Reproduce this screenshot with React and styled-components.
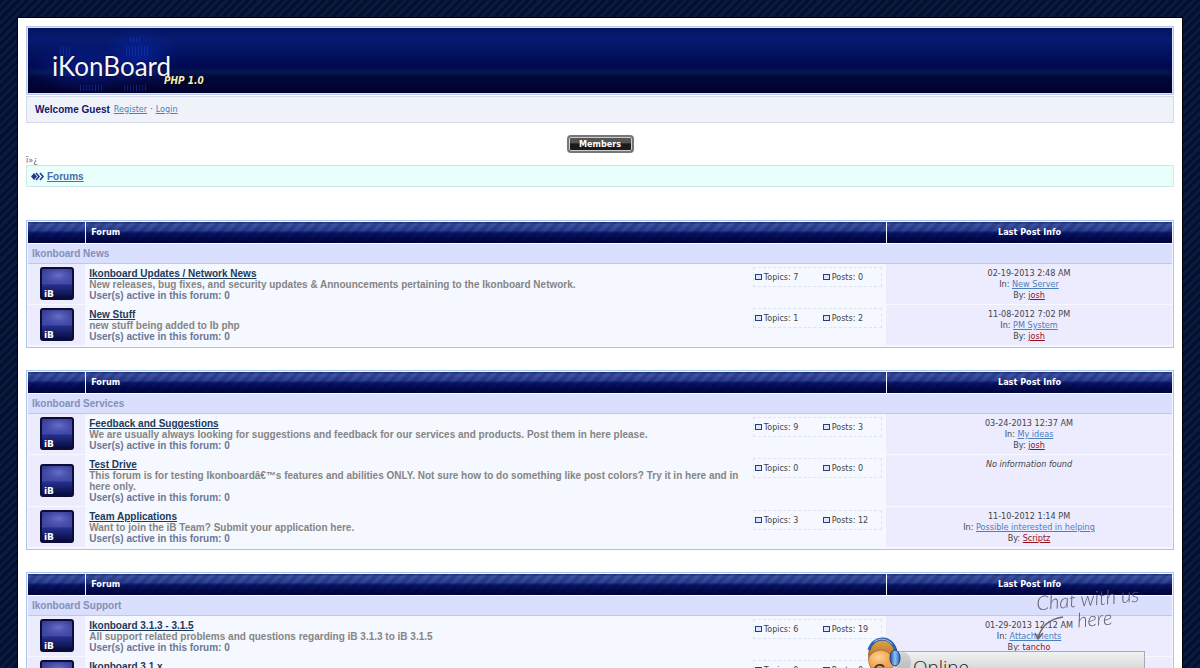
import React from "react";
import styled, { createGlobalStyle } from "styled-components";

const ui = `"DejaVu Sans Condensed", "DejaVu Sans", sans-serif`;
const boldUi = `"Liberation Sans", Arial, sans-serif`;

const Global = createGlobalStyle`
  * { box-sizing: border-box; }
  html { overflow: hidden; }
  body {
    margin: 0;
    padding: 17px;
    font: 9px/11px ${ui};
    color: #444;
    background: repeating-linear-gradient(135deg, #04102e 0 3px, #0a1b40 3px 6px);
  }
`;

const Page = styled.div`
  background: #fff;
  border: 1px solid #000;
  padding: 8px;
`;

const Banner = styled.header`
  height: 69px;
  border: 1px solid #b9c8ea;
  padding: 1px;
  background: #dde4fa;
`;

const BannerArt = styled.div`
  position: relative;
  height: 65px;
  background: linear-gradient(#04155f 0, #061b70 18%, #020f5c 45%, #010850 60%, #05184e 68%, #02063c 76%, #01022c 100%);
`;

const BannerGlow = styled.svg`
  display: block;
`;

const Logo = styled.h1`
  position: absolute;
  left: 24px;
  top: 23px;
  margin: 0;
  font: 400 26px/30px Lato, sans-serif;
  color: #f5f5ff;
  text-shadow: 0 0 2px #000;
`;

const Version = styled.span`
  position: absolute;
  left: 136px;
  top: 46px;
  font: italic 700 10px/14px "DejaVu Sans Condensed", sans-serif;
  color: #f4eebb;
  text-shadow: 1px 1px 1px #000;
`;

const UserBar = styled.nav`
  display: flex;
  align-items: center;
  gap: 4px;
  height: 27px;
  margin-top: 1px;
  padding: 0 8px;
  border: 1px solid #d3dce6;
  background: #eff3f9;
  strong { font: 700 10px/11px ${boldUi}; color: #16166b; }
`;

const UserLinks = styled.span`
  display: flex;
  gap: 3px;
`;

const Link = styled.a`
  color: ${(p) => p.$color || "#4a7fc0"};
  text-decoration: ${(p) => (p.$plain ? "none" : "underline")};
`;

const ButtonRow = styled.div`
  display: flex;
  justify-content: center;
  padding-top: 12px;
`;

const MembersButton = styled.button`
  width: 67px;
  height: 18px;
  padding: 0;
  border: 2px solid #777;
  border-radius: 4px;
  outline: 1px solid #ccc;
  outline-offset: -3px;
  background: linear-gradient(#555 0 40%, #1b1b1b 50%);
  color: #fff;
  font: 700 9px/12px ${ui};
`;

const Stray = styled.div`
  margin-top: 2px;
  font-size: 9px;
  margin-bottom: -1px;
  color: #666;
`;

const Crumbs = styled.nav`
  display: flex;
  align-items: center;
  gap: 3px;
  height: 22px;
  padding: 0 4px;
  margin-bottom: 33px;
  border: 1px solid #cfe9e6;
  background: #e8fffb;
  font: 700 10px/11px ${boldUi};
`;

const Board = styled.section`
  margin-bottom: 22px;
  border: 1px solid #a9c6e8;
  padding: 1px;
  background: #f4f6ff;
`;

const Table = styled.table`
  width: 100%;
  table-layout: fixed;
  border-collapse: separate;
  border-spacing: 0;
`;

const Head = styled.th`
  height: 22px;
  padding: 0 5px;
  border-bottom: 1px solid #fff;
  border-left: ${(p) => (p.$first ? "none" : "1px solid #f4f6ff")};
  background:
    repeating-linear-gradient(135deg, #0000 0 4px, #00002830 4px 8px),
    linear-gradient(#22358a 0, #3d52a4 12%, #2c4094 40%, #0a1767 52%, #020a50 75%, #01053a 100%);
  color: #fff;
  font-size: 9px;
  text-align: ${(p) => (p.$center ? "center" : "left")};
`;

const Category = styled.th`
  height: 20px;
  padding: 0 4px;
  border-bottom: 1px solid #bcc8ec;
  background: #d9dffd;
  color: #8390b8;
  font: 700 10px/11px ${boldUi};
  text-align: left;
`;

const Cell = styled.td`
  padding: ${(p) => (p.$tight ? "3px 4px" : "4px 4px 3px")};
  border-bottom: 1px solid #f8f9ff;
  background: ${(p) => (p.$tint ? "#ececfe" : "#f5f8fe")};
  vertical-align: ${(p) => (p.$middle ? "middle" : "top")};
  text-align: ${(p) => (p.$center ? "center" : "left")};
`;

const Badge = styled.svg`
  display: block;
  margin: 0 auto;
`;

const ForumText = styled.div`
  font: 700 10px/11px ${boldUi};
  color: #858585;
`;

const Active = styled.div`
  color: #6b7796;
`;

const Stats = styled.div`
  display: grid;
  grid-template-columns: 68px 1fr;
  align-items: center;
  height: 20px;
  padding-left: 1px;
  border: 1px dashed #dce4f2;
  font: 8px/11px "DejaVu Sans", sans-serif;
`;

const Stat = styled.span`
  display: flex;
  align-items: center;
  gap: 2px;
`;

const StatMark = styled.i`
  width: 7px;
  height: 6px;
  border: 1px solid #2b3c86;
  background: #dbe6fb;
`;

const Chat = styled.aside`
  position: fixed;
  right: 55px;
  bottom: 0;
  width: 280px;
  height: 84px;
`;

const Hand = styled.span`
  position: absolute;
  left: ${(p) => p.$x}px;
  top: ${(p) => p.$y}px;
  transform: rotate(-5deg);
  font: italic 300 20px/24px Lato, cursive;
  color: #5f5f68;
  white-space: nowrap;
`;

const ChatBar = styled.button`
  position: absolute;
  left: 20px;
  right: 0;
  bottom: 0;
  height: 17px;
  padding: 4px 0 0 27px;
  overflow: hidden;
  border: 1px solid #aaa;
  border-bottom: 0;
  background: linear-gradient(#f0f1f1, #d8dadb);
  font: 300 19px/22px "Open Sans", sans-serif;
  color: #222;
  text-align: left;
`;

const ChatArt = styled.svg`
  position: absolute;
  left: 0;
  top: 0;
  pointer-events: none;
`;

const boards = [
  {
    name: "Ikonboard News",
    forums: [
      { title: "Ikonboard Updates / Network News", text: "New releases, bug fixes, and security updates & Announcements pertaining to the Ikonboard Network.", topics: 7, posts: 0, date: "02-19-2013 2:48 AM", topic: "New Server", by: "josh" },
      { title: "New Stuff", text: "new stuff being added to Ib php", topics: 1, posts: 2, date: "11-08-2012 7:02 PM", topic: "PM System", by: "josh" },
    ],
  },
  {
    name: "Ikonboard Services",
    forums: [
      { title: "Feedback and Suggestions", text: "We are usually always looking for suggestions and feedback for our services and products. Post them in here please.", topics: 9, posts: 3, date: "03-24-2013 12:37 AM", topic: "My ideas", by: "josh" },
      { title: "Test Drive", text: "This forum is for testing Ikonboardâ€™s features and abilities ONLY. Not sure how to do something like post colors? Try it in here and in here only.", topics: 0, posts: 0 },
      { title: "Team Applications", text: "Want to join the iB Team? Submit your application here.", topics: 3, posts: 12, date: "11-10-2012 1:14 PM", topic: "Possible interested in helping", by: "Scriptz" },
    ],
  },
  {
    name: "Ikonboard Support",
    forums: [
      { title: "Ikonboard 3.1.3 - 3.1.5", text: "All support related problems and questions regarding iB 3.1.3 to iB 3.1.5", topics: 6, posts: 19, date: "01-29-2013 12:12 AM", topic: "Attachments", by: "tancho", plain: true },
      { title: "Ikonboard 3.1.x", text: "", topics: 0, posts: 0 },
    ],
  },
];

function ForumBadge() {
  return (
    <Badge width="34" height="34" viewBox="0 0 34 34" aria-hidden="true">
      <defs>
        <linearGradient id="badge" x2="0" y2="1">
          <stop offset="0" stopColor="#343a94" />
          <stop offset=".5" stopColor="#4048a6" />
          <stop offset=".55" stopColor="#262f8c" />
          <stop offset="1" stopColor="#04083c" />
        </linearGradient>
        <radialGradient id="sheen" cx=".55" cy=".4" r=".6">
          <stop offset="0" stopColor="#747bd0" stopOpacity=".8" />
          <stop offset="1" stopColor="#5a60c0" stopOpacity="0" />
        </radialGradient>
      </defs>
      <rect x="1" y="1" width="32" height="31" rx="2" fill="url(#badge)" stroke="#0c0d33" strokeWidth="2" />
      <rect x="2" y="2" width="30" height="16" fill="url(#sheen)" />
      <text x="4" y="30" fill="#fff" fontSize="9" fontWeight="700" fontFamily="DejaVu Sans, sans-serif">iB</text>
    </Badge>
  );
}

function ForumRow({ f }) {
  return (
    <tr>
      <Cell $tint $middle $tight><ForumBadge /></Cell>
      <Cell>
        <ForumText>
          <Link href="#" $color="#1c3a5c">{f.title}</Link>
          <div>{f.text}</div>
          <Active>User(s) active in this forum: 0</Active>
        </ForumText>
      </Cell>
      <Cell $tight>
        <Stats>
          <Stat><StatMark />Topics: {f.topics}</Stat>
          <Stat><StatMark />Posts: {f.posts}</Stat>
        </Stats>
      </Cell>
      <Cell $tint $center>
        {f.date ? (
          <>
            {f.date}<br />
            In: <Link href="#">{f.topic}</Link><br />
            By: <Link href="#" $color="#960f1e" $plain={f.plain}>{f.by}</Link>
          </>
        ) : <em>No information found</em>}
      </Cell>
    </tr>
  );
}

export default function App() {
  return (
    <>
      <Global />
      <Page>
        <Banner>
          <BannerArt>
            <BannerGlow width="190" height="65" viewBox="0 0 190 65" aria-hidden="true">
              <defs>
                <radialGradient id="glow">
                  <stop offset="0" stopColor="#0a2cc0" stopOpacity=".5" />
                  <stop offset="1" stopColor="#0a2cc0" stopOpacity="0" />
                </radialGradient>
              </defs>
              <ellipse cx="60" cy="40" rx="60" ry="25" fill="url(#glow)" />
              <ellipse cx="112" cy="30" rx="40" ry="30" fill="url(#glow)" />
              <g stroke="#1c3cd0" strokeWidth="10" strokeDasharray="1 2" opacity=".45">
                <path d="M98 23h22M32 24h10" />
                <path d="M52 60h24M96 60h24" strokeWidth="6" />
                <path d="M102 12h12M28 46h24" strokeWidth="5" />
              </g>
            </BannerGlow>
            <Logo>iKonBoard</Logo>
            <Version>PHP 1.0</Version>
          </BannerArt>
        </Banner>
        <UserBar>
          <strong>Welcome Guest</strong>
          <UserLinks>
            <Link href="#">Register</Link>·<Link href="#">Login</Link>
          </UserLinks>
        </UserBar>
        <ButtonRow><MembersButton>Members</MembersButton></ButtonRow>
        <Stray>ï»¿</Stray>
        <Crumbs>
          <svg width="13" height="9" viewBox="0 0 13 9" aria-hidden="true">
            <path d="M0 4.500L3 1l3 3.500L3 8z" fill="#27378a" />
            <path d="M5 1l3 3.500L5 8M9 1l3 3.500L9 8" fill="none" stroke="#27378a" strokeWidth="1.600" />
          </svg>
          <Link href="#" $color="#4a6ea8">Forums</Link>
        </Crumbs>
        {boards.map((b) => (
          <Board key={b.name}>
            <Table>
              <colgroup>
                <col style={{ width: "5%" }} />
                <col />
                <col style={{ width: "12%" }} />
                <col style={{ width: "25%" }} />
              </colgroup>
              <thead>
                <tr>
                  <Head $first aria-label="Status" />
                  <Head colSpan={2}>Forum</Head>
                  <Head $center>Last Post Info</Head>
                </tr>
              </thead>
              <tbody>
                <tr><Category colSpan={4}>{b.name}</Category></tr>
                {b.forums.map((f) => <ForumRow key={f.title} f={f} />)}
              </tbody>
            </Table>
          </Board>
        ))}
      </Page>
      <Chat>
        <ChatBar>Online</ChatBar>
        <Hand $x={171} $y={2}>Chat with us</Hand>
        <Hand $x={212} $y={22}>here</Hand>
        <ChatArt width="280" height="84" viewBox="0 0 280 84" aria-hidden="true">
          <defs>
            <linearGradient id="hair" x2="0" y2="1">
              <stop offset="0" stopColor="#e2a24a" />
              <stop offset="1" stopColor="#a8651a" />
            </linearGradient>
            <radialGradient id="face" cx=".4" cy=".4">
              <stop offset="0" stopColor="#ffd096" />
              <stop offset="1" stopColor="#f0a552" />
            </radialGradient>
            <linearGradient id="phone">
              <stop offset="0" stopColor="#1d4f9e" />
              <stop offset=".5" stopColor="#8fc2f2" />
              <stop offset="1" stopColor="#2461b4" />
            </linearGradient>
          </defs>
          <ellipse cx="38" cy="78" rx="8" ry="10" fill="#000" opacity=".12" />
          <path d="M4 76C2 62 9 56 18 56s16 7 14 22z" fill="url(#hair)" stroke="#7a4512" strokeWidth=".8" />
          <path d="M4 73c5-8 17-10 23 0 2 4 1 8 0 11H6c-2-4-3-7-2-11z" fill="url(#face)" stroke="#b06a24" strokeWidth=".8" />
          <path d="M4 66C8 51 28 51 31 68" fill="none" stroke="#2a62b0" strokeWidth="3" />
          <path d="M9 58C14 54 22 54 27 60" fill="none" stroke="#9cc8f2" />
          <ellipse cx="30" cy="74" rx="5" ry="8" fill="url(#phone)" stroke="#173f80" />
          <path d="M10 84c2-4 7-4 9-1" fill="none" stroke="#4a3424" strokeWidth="2" />
          <path d="M198 33c-14 2-22 10-25 21M170 49l3 6 5-6" fill="none" stroke="#6a6a72" strokeWidth="1.500" />
        </ChatArt>
      </Chat>
    </>
  );
}
